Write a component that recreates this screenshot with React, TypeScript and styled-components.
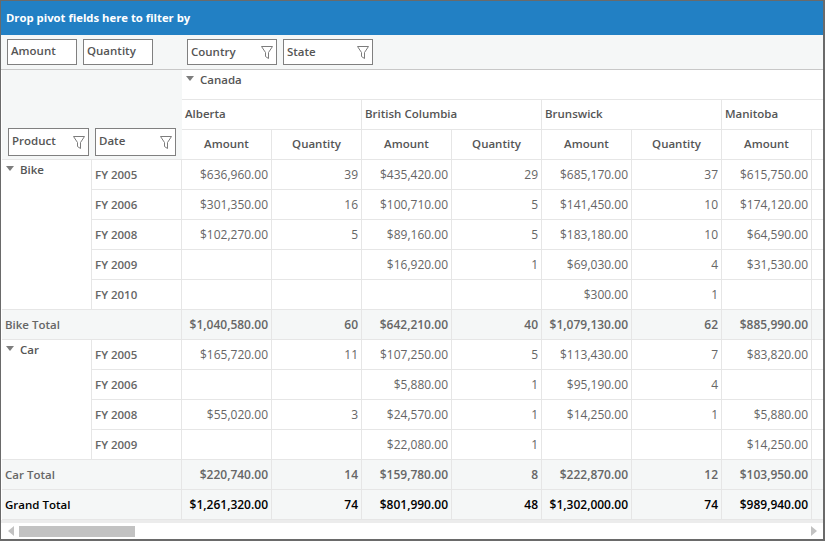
import styled, { createGlobalStyle } from 'styled-components';

const GlobalStyle = createGlobalStyle`
    html, body {
        margin: 0;
        padding: 0;
        background: #fff;
    }
    body {
        font-family: "Open Sans", "Noto Sans", sans-serif;
        font-size: 11.5px;
    }
`;

const Frame = styled.div`
    box-sizing: border-box;
    width: 825px;
    height: 541px;
    border: 1px solid #6a6a6a;
    border-right-width: 2px;
    border-bottom-width: 2px;
    display: flex;
    flex-direction: column;
    overflow: hidden;
`;

const Banner = styled.div`
    height: 34px;
    flex: none;
    background: #2280c4;
    color: #fff;
    font-weight: 700;
    font-size: 11.3px;
    line-height: 33px;
    padding-left: 5px;
`;

const FilterBar = styled.div`
    height: 35px;
    flex: none;
    box-sizing: border-box;
    background: #f5f7f7;
    border-bottom: 1px solid #c8c8c8;
    padding: 4px 0 0 6px;
    display: flex;
    gap: 6px;
`;

const Chip = styled.div<{ $width: number; $height?: number; $gapLeft?: number; $lineHeight?: number }>`
    box-sizing: border-box;
    width: ${props => props.$width}px;
    height: ${props => props.$height ?? 26}px;
    margin-left: ${props => props.$gapLeft ?? 0}px;
    border: 1px solid #808080;
    background: #fff;
    color: #555;
    font-weight: 600;
    line-height: ${props => props.$lineHeight ?? 24}px;
    padding: 0 3px;
    display: flex;
    justify-content: space-between;
    align-items: flex-start;
    flex: none;
`;

const FunnelIcon = styled.svg`
    width: 12px;
    height: 13px;
    align-self: center;
    flex: none;
`;

const Funnel = () => (
    <FunnelIcon viewBox="0 0 12 13" fill="none" stroke="#7c7c7c" strokeWidth="1">
        <path d="M.5.5h11L7.5 6.5v6L4.5 10.5v-4z" />
    </FunnelIcon>
);

const PivotGrid = styled.div`
    flex: none;
    display: grid;
    grid-template-columns: repeat(10, 90px);
    grid-auto-rows: 30px;
    width: 900px;
    margin-left: 1px;
`;

const Cell = styled.div<{ $span?: number; $rows?: number; $shade?: boolean }>`
    box-sizing: border-box;
    grid-column: span ${props => props.$span ?? 1};
    grid-row: span ${props => props.$rows ?? 1};
    border-right: 1px solid #e6e6e6;
    border-bottom: 1px solid #e6e6e6;
    background: ${props => (props.$shade ? '#f5f7f7' : '#fff')};
    color: #666;
    line-height: 29px;
    white-space: nowrap;
    overflow: hidden;
`;

const Corner = styled(Cell)`
    display: flex;
    align-items: flex-end;
    gap: 6px;
    padding: 0 0 3px 6px;
    background: #f5f7f7;
    border-right: none;
`;

const GroupHeader = styled(Cell)`
    font-weight: 600;
    color: #555;
    line-height: 20px;
    padding-left: 4px;
    display: flex;
    gap: 6px;
`;

const ColumnHeader = styled(Cell)`
    font-weight: 600;
    color: #555;
    line-height: 28px;
    text-align: center;
`;

const StateHeader = styled(Cell)`
    font-weight: 600;
    color: #555;
    line-height: 28px;
    padding-left: 3px;
`;

const Value = styled(Cell)<{ $bold?: boolean; $grand?: boolean }>`
    font-size: 12px;
    text-align: right;
    padding-right: 3px;
    font-weight: ${props => (props.$bold || props.$grand ? 600 : 400)};
    color: ${props => (props.$grand ? '#000' : '#666')};
`;

const YearLabel = styled(Cell)`
    font-weight: 600;
    color: #666;
    padding-left: 3px;
`;

const TotalLabel = styled(Cell)<{ $grand?: boolean }>`
    font-weight: 600;
    color: ${props => (props.$grand ? '#000' : '#666')};
    padding-left: 3px;
`;

const Caret = styled.span`
    width: 0;
    height: 0;
    margin-top: 6px;
    border-left: 4.5px solid transparent;
    border-right: 4.5px solid transparent;
    border-top: 5px solid #7d7d7d;
    flex: none;
`;

const ScrollBand = styled.div`
    height: 3px;
    flex: none;
    background: #ececec;
`;

const ScrollBar = styled.div`
    flex: 1;
    display: flex;
    align-items: center;
    padding: 0 6px 0 7px;
    gap: 5px;
`;

const ScrollThumb = styled.div`
    width: 116px;
    height: 11px;
    background: #c2c2c2;
`;

const ScrollSpacer = styled.div`
    flex: 1;
`;

const ArrowLeft = styled.span`
    border-top: 5px solid transparent;
    border-bottom: 5px solid transparent;
    border-right: 6px solid #c2c2c2;
`;

const ArrowRight = styled.span`
    border-top: 5px solid transparent;
    border-bottom: 5px solid transparent;
    border-left: 6px solid #c2c2c2;
`;

const states = ['Alberta', 'British Columbia', 'Brunswick', 'Manitoba'];

// the last Quantity column is scrolled out of view, only its left edge shows
const measures = ['Amount', 'Quantity', 'Amount', 'Quantity', 'Amount', 'Quantity', 'Amount', ''];

type Row = [string, ...string[]];

const bikeRows: Row[] = [
    ['FY 2005', '$636,960.00', '39', '$435,420.00', '29', '$685,170.00', '37', '$615,750.00'],
    ['FY 2006', '$301,350.00', '16', '$100,710.00', '5', '$141,450.00', '10', '$174,120.00'],
    ['FY 2008', '$102,270.00', '5', '$89,160.00', '5', '$183,180.00', '10', '$64,590.00'],
    ['FY 2009', '', '', '$16,920.00', '1', '$69,030.00', '4', '$31,530.00'],
    ['FY 2010', '', '', '', '', '$300.00', '1', ''],
];

const carRows: Row[] = [
    ['FY 2005', '$165,720.00', '11', '$107,250.00', '5', '$113,430.00', '7', '$83,820.00'],
    ['FY 2006', '', '', '$5,880.00', '1', '$95,190.00', '4', ''],
    ['FY 2008', '$55,020.00', '3', '$24,570.00', '1', '$14,250.00', '1', '$5,880.00'],
    ['FY 2009', '', '', '$22,080.00', '1', '', '', '$14,250.00'],
];

const bikeTotal = ['$1,040,580.00', '60', '$642,210.00', '40', '$1,079,130.00', '62', '$885,990.00'];
const carTotal = ['$220,740.00', '14', '$159,780.00', '8', '$222,870.00', '12', '$103,950.00'];
const grandTotal = ['$1,261,320.00', '74', '$801,990.00', '48', '$1,302,000.00', '74', '$989,940.00'];

const withHidden = (values: string[]) => [...values, ''];

function YearRow({ year, values }: { year: string; values: string[] }) {
    return (
        <>
            <YearLabel>{year}</YearLabel>
            {withHidden(values).map((value, i) => (
                <Value key={i}>{value}</Value>
            ))}
        </>
    );
}

function Group({ name, rows, total }: { name: string; rows: Row[]; total: string[] }) {
    return (
        <>
            <GroupHeader $rows={rows.length}>
                <Caret />
                {name}
            </GroupHeader>
            {rows.map(([year, ...values], rowIndex) => (
                <YearRow key={rowIndex} year={year} values={values} />
            ))}
            <TotalLabel $span={2} $shade>{name} Total</TotalLabel>
            {withHidden(total).map((value, i) => (
                <Value key={i} $shade $bold>{value}</Value>
            ))}
        </>
    );
}

export default function App() {
    return (
        <Frame>
            <GlobalStyle />
            <Banner>Drop pivot fields here to filter by</Banner>
            <FilterBar>
                <Chip $width={70} $lineHeight={22}>Amount</Chip>
                <Chip $width={70} $lineHeight={22}>Quantity</Chip>
                <Chip $width={90} $gapLeft={28}>Country<Funnel /></Chip>
                <Chip $width={90}>State<Funnel /></Chip>
            </FilterBar>
            <PivotGrid>
                <Corner $span={2} $rows={3}>
                    <Chip $width={81} $height={28}>Product<Funnel /></Chip>
                    <Chip $width={81} $height={28}>Date<Funnel /></Chip>
                </Corner>
                <GroupHeader $span={8}>
                    <Caret />
                    Canada
                </GroupHeader>
                {states.map(state => (
                    <StateHeader key={state} $span={2}>{state}</StateHeader>
                ))}
                {measures.map((measure, i) => (
                    <ColumnHeader key={i}>{measure}</ColumnHeader>
                ))}
                <Group name="Bike" rows={bikeRows} total={bikeTotal} />
                <Group name="Car" rows={carRows} total={carTotal} />
                <TotalLabel $span={2} $shade $grand>Grand Total</TotalLabel>
                {withHidden(grandTotal).map((value, i) => (
                    <Value key={i} $shade $grand>{value}</Value>
                ))}
            </PivotGrid>
            <ScrollBand />
            <ScrollBar>
                <ArrowLeft />
                <ScrollThumb />
                <ScrollSpacer />
                <ArrowRight />
            </ScrollBar>
        </Frame>
    );
}
